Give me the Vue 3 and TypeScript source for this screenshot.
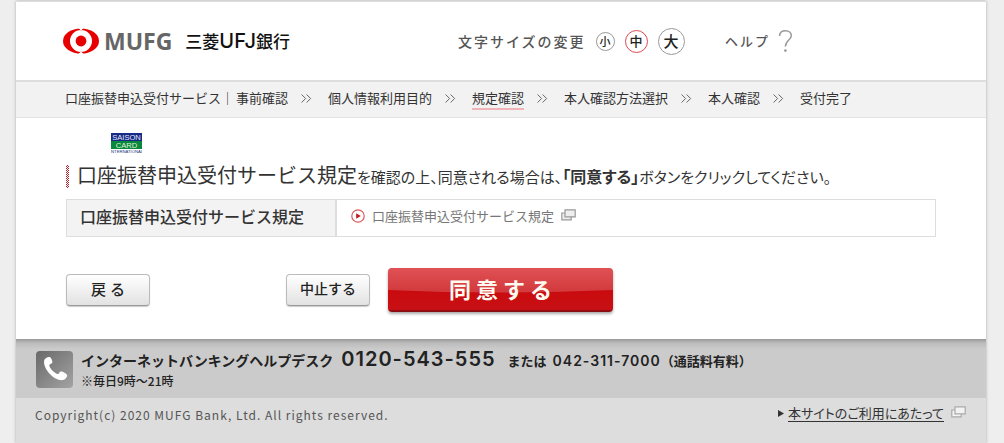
<script setup lang="ts">
import { ref } from 'vue'

interface Step {
  label: string
  service?: string
  current?: boolean
}

const steps: Step[] = [
  { service: '口座振替申込受付サービス', label: '事前確認' },
  { label: '個人情報利用目的' },
  { label: '規定確認', current: true },
  { label: '本人確認方法選択' },
  { label: '本人確認' },
  { label: '受付完了' },
]

const sizes = [
  { key: 'small', label: '小' },
  { key: 'medium', label: '中' },
  { key: 'large', label: '大' },
]
const selectedSize = ref('medium')
</script>

<template>
  <div class="page">
    <div class="sheet">
      <header class="header">
        <a class="brand" href="#">
          <svg class="brand-mark" width="36" height="26" viewBox="0 0 36 26" aria-hidden="true">
            <ellipse cx="18" cy="13" rx="18" ry="12.6" fill="#e60000" />
            <circle cx="18" cy="13" r="11" fill="#fff" />
            <path d="M15.6 0h4.8L18 3zM15.6 26h4.8L18 23z" fill="#fff" />
            <path d="M13 1.4Q18 2.6 23 1.4Q20 .2 18 2.6Q16 .2 13 1.4M13 24.6Q18 23.4 23 24.6Q20 25.8 18 23.4Q16 25.8 13 24.6" fill="#e60000" />
            <circle cx="18" cy="13" r="5.4" fill="#e60000" />
          </svg>
          <span class="brand-group">MUFG</span>
          <span class="brand-bank">三菱<span class="brand-latin">UFJ</span>銀行</span>
        </a>
        <div class="sizes" role="group" aria-labelledby="size-label">
          <span id="size-label" class="tracked">文字サイズの変更</span>
          <button
            v-for="size in sizes"
            :key="size.key"
            type="button"
            :class="['size', size.key, { selected: selectedSize === size.key }]"
            :aria-pressed="selectedSize === size.key"
            @click="selectedSize = size.key"
          >{{ size.label }}</button>
        </div>
        <a class="help" href="#">
          <span class="tracked">ヘルプ</span>
          <svg width="15" height="24" viewBox="0 0 15 24" aria-hidden="true">
            <path d="M1.5 7C1.7 3.6 4 1.8 7.4 1.8S13.3 3.8 13.3 6.8C13.3 11 7.4 11.2 7.4 17.5" fill="none" stroke="#999" stroke-width="1.5" />
            <circle cx="7.4" cy="21.6" r="1.3" fill="#999" />
          </svg>
        </a>
      </header>

      <nav class="steps" aria-label="手続きの流れ">
        <ol>
          <li v-for="(step, i) in steps" :key="step.label">
            <svg v-if="i > 0" class="chevrons" width="11" height="9" viewBox="0 0 11 9" aria-hidden="true">
              <path d="M.6.5l4 4-4 4M5.6.5l4 4-4 4" fill="none" stroke="#666" />
            </svg>
            <span v-if="step.service">{{ step.service }}<span class="bar">｜</span></span>
            <span :class="{ current: step.current }">{{ step.label }}</span>
          </li>
        </ol>
      </nav>

      <main class="main">
        <svg class="saison" width="31" height="20" viewBox="0 0 31 20" role="img" aria-label="SAISON CARD INTERNATIONAL">
          <rect width="31" height="9" fill="#172a86" />
          <rect y="8" width="31" height="8" fill="#07883c" />
          <text x="15.5" y="7" font-size="7.6" fill="#e4e8f8">SAISON</text>
          <text x="15.5" y="14.8" font-size="7.6" fill="#e2f3dc">CARD</text>
          <text x="15.5" y="19.8" font-size="4.2" fill="#24347c">INTERNATIONAL</text>
        </svg>
        <h1 class="lead">
          <span class="lead-title">口座振替申込受付サービス規定</span>を確認の上、同意される場合は、<strong>「同意する」</strong>ボタンをクリックしてください。
        </h1>
        <table class="terms">
          <tbody>
            <tr>
              <th scope="row">口座振替申込受付サービス規定</th>
              <td>
                <a href="#">
                  <svg width="14" height="14" viewBox="0 0 14 14" aria-hidden="true">
                    <circle cx="7" cy="7" r="6.2" fill="#fff" stroke="#dc5960" stroke-width="1.2" />
                    <path d="M5.2 4.2v5.6L9.8 7z" fill="#c4161c" />
                  </svg>
                  <span>口座振替申込受付サービス規定</span>
                  <svg class="window" width="15" height="12" viewBox="0 0 15 12" aria-hidden="true">
                    <path d="M.8 4h9.4v6.8H.8z" fill="#eee" stroke="#999" stroke-width="1.2" />
                    <path d="M4 .8h10.2v7H4z" fill="#eee" stroke="#999" stroke-width="1.2" />
                  </svg>
                </a>
              </td>
            </tr>
          </tbody>
        </table>
        <div class="actions">
          <button type="button" class="plain back">戻る</button>
          <button type="button" class="plain stop">中止する</button>
          <button type="button" class="agree">
            <svg class="gloss" viewBox="0 0 225 44" preserveAspectRatio="none" aria-hidden="true">
              <path d="M0 0H225V22Q112 27 0 22z" fill="#fff" />
            </svg>
            <span>同意する</span>
          </button>
        </div>
      </main>

      <section class="desk">
        <svg class="phone" width="37" height="37" viewBox="0 0 37 37" aria-hidden="true">
          <defs>
            <linearGradient id="phone-bg" x1="0" y1="0" x2="1" y2="1">
              <stop offset="0" stop-color="#696969" />
              <stop offset="1" stop-color="#a3a3a3" />
            </linearGradient>
          </defs>
          <rect width="37" height="37" rx="4" fill="url(#phone-bg)" />
          <path d="M8.3 9C8.8 7 12.7 5.2 14.2 6.2C15.5 7.1 17 11 16.2 12.1C15.5 13 13.3 13.1 13.3 14.3C13.4 17.4 18.6 22.5 21.8 23.1C23.1 23.3 23.3 21.1 24.5 20.6C26 20 30.5 22.6 31.1 24C31.7 25.5 29 28.8 27 29.1C18.5 30.4 6.2 17.6 8.3 9z" fill="#fff" />
        </svg>
        <div>
          <p class="desk-line">
            <span class="desk-name">インターネットバンキングヘルプデスク</span>
            <span class="tel-main">0120-543-555</span>
            <span>または</span>
            <span class="tel-sub">042-311-7000</span>
            <span class="toll">（通話料有料）</span>
          </p>
          <p class="hours">※毎日9時～21時</p>
        </div>
      </section>

      <footer class="footer">
        <small>Copyright(c) 2020 MUFG Bank, Ltd. All rights reserved.</small>
        <a href="#">
          <svg width="6" height="7" viewBox="0 0 6 7" aria-hidden="true"><path d="M0 0v7l6-3.5z" fill="#333" /></svg>
          <span class="footer-link">本サイトのご利用にあたって</span>
          <svg class="window" width="15" height="12" viewBox="0 0 15 12" aria-hidden="true">
            <path d="M.8 4h9.4v6.8H.8z" fill="#f3f3f3" stroke="#aaa" stroke-width="1.2" />
            <path d="M4 .8h10.2v7H4z" fill="#f3f3f3" stroke="#aaa" stroke-width="1.2" />
          </svg>
        </a>
      </footer>
    </div>
  </div>
</template>

<style>
body {
  margin: 0;
  background: #eee;
}
</style>

<style scoped>
.page {
  box-sizing: border-box;
  display: flex;
  min-height: 100vh;
  padding: 1px 18px 0 16px;
  background: #eee;
  color: #333;
  font-family: "Noto Sans CJK JP", sans-serif;
  font-size: 13px;
  line-height: 20px;
}
.sheet {
  display: flex;
  flex: 1;
  flex-direction: column;
  min-width: 0;
  border-top: 1px solid #ddd;
  background: #fff;
  box-shadow: 0 0 3px #aaa;
}
a {
  color: inherit;
  text-decoration: none;
}
button {
  padding: 0;
  color: #222;
  font-family: inherit;
  cursor: pointer;
}
svg {
  display: block;
  flex: none;
}
.header {
  display: flex;
  align-items: center;
  height: 78px;
  padding-left: 47px;
}
.brand {
  display: flex;
  align-items: center;
  width: 395px;
}
.brand-group {
  margin-left: 5px;
  color: #666;
  font: bold 23px/26px "Noto Sans", sans-serif;
}
.brand-bank {
  margin-left: 13px;
  color: #111;
  font-size: 17px;
  font-weight: 500;
}
.brand-latin {
  font-family: Inter, sans-serif;
  font-size: 20px;
}
.tracked {
  color: #555;
  font-weight: 500;
  letter-spacing: 2px;
}
.sizes {
  display: flex;
  align-items: center;
  width: 267px;
}
.sizes .tracked {
  margin-right: 10px;
  font-size: 14px;
}
.size {
  box-sizing: border-box;
  border: 1px solid #999;
  border-radius: 50%;
  background: #fff;
  font-weight: 500;
  line-height: 16px;
}
.small {
  width: 19px;
  height: 19px;
  margin-right: 10px;
  font-size: 11px;
}
.medium {
  width: 23px;
  height: 23px;
  margin-right: 10px;
  font-size: 13px;
}
.large {
  width: 27px;
  height: 27px;
  font-size: 15px;
}
.selected {
  border-color: #dc4a50;
}
.help {
  display: flex;
  align-items: center;
  gap: 8px;
}
.steps {
  border-top: 2px solid #ddd;
  border-bottom: 1px solid #e3e3e3;
  background: #f2f2f2;
}
.steps ol {
  display: flex;
  align-items: center;
  box-sizing: border-box;
  height: 35px;
  margin: 0;
  padding: 0 0 3px 49px;
  list-style: none;
}
.steps li {
  display: flex;
  align-items: center;
  white-space: nowrap;
}
.chevrons {
  margin: 0 16px 0 13px;
}
.bar {
  margin-right: 2px;
}
.current {
  box-shadow: 0 2px #f0b4b8;
}
.main {
  padding: 15px 50px 27px;
}
.saison {
  margin-left: 45px;
  font-family: "Liberation Sans", sans-serif;
  text-anchor: middle;
}
.lead {
  position: relative;
  margin: 12px 0 11px;
  padding-left: 11px;
  font-size: 15px;
  font-weight: 400;
  font-feature-settings: "palt";
  line-height: 23px;
}
.lead::before {
  position: absolute;
  inset: 0 auto 0 0;
  width: 3px;
  background: repeating-conic-gradient(#b8222c 0 25%, #fff 0 50%) 0 0 / 2px 2px;
  content: "";
}
.lead-title {
  font-size: 20px;
  font-feature-settings: normal;
  line-height: 18px;
}
.lead strong {
  font-size: 16px;
  line-height: 20px;
}
.terms {
  width: 100%;
  border: 1px solid #ddd;
  border-collapse: separate;
  border-spacing: 0;
}
.terms th {
  box-sizing: border-box;
  width: 270px;
  height: 36px;
  padding: 0 13px 4px;
  border-right: 2px solid #ddd;
  background: #f3f3f3;
  font-size: 16px;
  font-weight: 500;
  text-align: left;
  white-space: nowrap;
}
.terms td {
  padding: 0 14px 4px;
}
.terms a {
  display: flex;
  align-items: center;
  gap: 7px;
  color: #777;
}
.terms .window {
  margin-bottom: 3px;
}
.actions {
  display: flex;
  align-items: center;
  margin-top: 31px;
}
.plain {
  box-sizing: border-box;
  width: 84px;
  height: 32px;
  padding-bottom: 4px;
  border: 1px solid #bbb;
  border-bottom-color: #999;
  border-radius: 4px;
  background: linear-gradient(#fff, #e2e2e2);
  box-shadow: 0 1px 1px #ccc;
  font-size: 14px;
  font-weight: 500;
}
.back {
  margin-right: 136px;
  padding-left: 4px;
  font-size: 15px;
  letter-spacing: 4px;
}
.stop {
  margin-right: 18px;
}
.agree {
  position: relative;
  width: 225px;
  height: 44px;
  padding: 0 0 4px 5px;
  overflow: hidden;
  border: 0;
  border-radius: 4px;
  background: linear-gradient(#d8262b, #c90b0f 50%, #c81014 94%, #8d0d12 97%);
  box-shadow: 0 2px 3px #aaa;
  color: #fffaf0;
  font-size: 22px;
  font-weight: 700;
  letter-spacing: 5px;
}
.agree span {
  position: relative;
}
.gloss {
  position: absolute;
  inset: 0;
  width: 100%;
  height: 100%;
  opacity: 0.2;
}
.desk {
  display: flex;
  align-items: flex-start;
  gap: 8px;
  padding: 9px 20px;
  background: linear-gradient(#999, #bbb 4px, #cbcbcb 10px);
  color: #222;
}
.phone {
  margin-top: 3px;
}
.desk p {
  margin: 0;
}
.desk-line {
  display: flex;
  align-items: baseline;
  font-weight: 700;
  line-height: 22px;
}
.desk-name {
  margin-right: 8px;
  font-size: 14px;
}
.tel-main {
  margin-right: 12px;
  font-family: Inter, sans-serif;
  font-size: 20px;
  font-weight: 600;
  letter-spacing: 1px;
}
.tel-sub {
  margin-left: 6px;
  font-family: Inter, sans-serif;
  font-size: 14px;
  font-weight: 600;
  letter-spacing: 1px;
}
.hours {
  font-size: 12px;
  font-weight: 500;
  line-height: 17px;
}
.footer {
  display: flex;
  flex: 1;
  align-items: flex-start;
  justify-content: space-between;
  padding: 7px 20px 0 19px;
  background: #ddd;
}
.footer small {
  color: #555;
  font-size: 12px;
  letter-spacing: 1px;
}
.footer a {
  display: flex;
  align-items: center;
  gap: 4px;
}
.footer-link {
  border-bottom: 1px solid #333;
  font-feature-settings: "palt";
  line-height: 16px;
}
.footer .window {
  margin: 0 0 4px 3px;
}
</style>
